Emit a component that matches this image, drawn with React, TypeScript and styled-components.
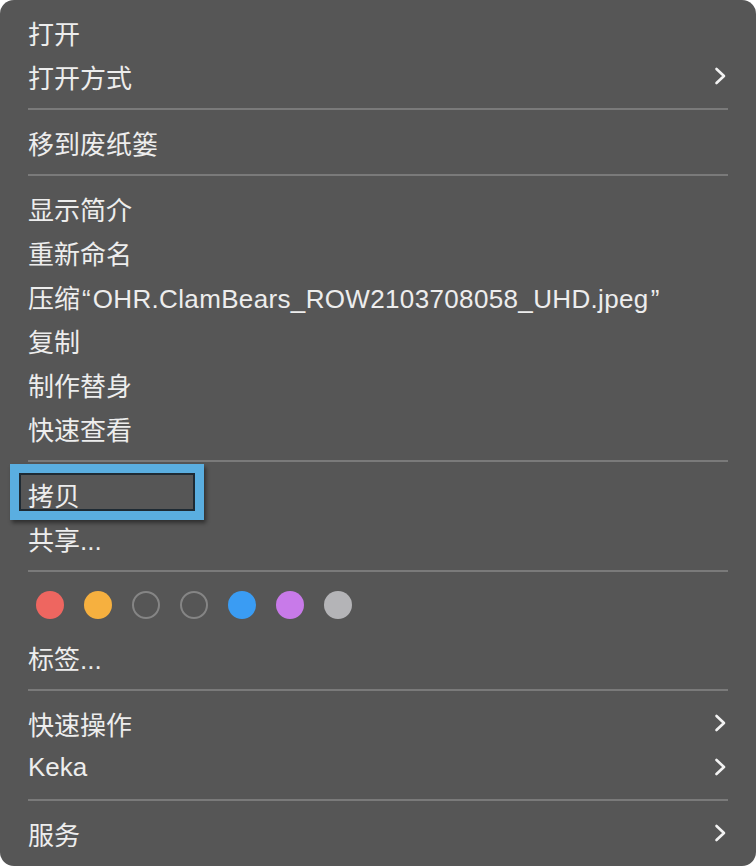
import styled, { createGlobalStyle } from 'styled-components'

const GlobalStyle = createGlobalStyle`
  html, body {
    margin: 0;
    padding: 0;
    background: #ffffff;
  }
  #root {
    width: 756px;
    height: 866px;
  }
`

const Menu = styled.div`
  position: relative;
  box-sizing: border-box;
  width: 756px;
  height: 866px;
  padding: 10px 0;
  background: #565656;
  border-radius: 14px;
  display: flex;
  flex-direction: column;
  font-family: 'Liberation Sans', 'Noto Sans CJK SC', sans-serif;
  color: #ededed;
`

const Row = styled.div`
  height: 44px;
  display: flex;
  align-items: center;
  justify-content: space-between;
  padding: 0 28px 0 28px;
  font-size: 26px;
  white-space: nowrap;
`

const Quote = styled.span`
  display: inline-block;
  margin: 0 2px;
`

const FileName = styled.span`
  letter-spacing: 0.35px;
`

const Separator = styled.div`
  height: 22px;
  display: flex;
  align-items: center;
  padding: 0 28px;
  &::after {
    content: '';
    flex: 1;
    height: 2px;
    background: #7a7a7a;
  }
`

const DotRow = styled.div`
  display: flex;
  gap: 20px;
  padding: 9px 36px 16px;
`

const Dot = styled.span<{ $fill?: string }>`
  width: 28px;
  height: 28px;
  box-sizing: border-box;
  border-radius: 50%;
  background: ${(p) => p.$fill ?? 'transparent'};
  border: ${(p) => (p.$fill ? 'none' : '2px solid #858585')};
`

const Highlight = styled.div`
  position: absolute;
  left: 10px;
  top: 464px;
  width: 194px;
  height: 56px;
  box-sizing: border-box;
  border: 9px solid #5aaee0;
  box-shadow: inset 0 0 0 2px #1e2a33, 2px 3px 4px rgba(0, 0, 0, 0.45);
`

const Chevron = () => (
  <svg width='16' height='20' viewBox='0 0 16 20'>
    <path
      d='M4.5 3 L12 10 L4.5 17'
      fill='none'
      stroke='#f2f2f2'
      strokeWidth='2.6'
      strokeLinecap='round'
      strokeLinejoin='round'
    />
  </svg>
)

const tagColors = [
  '#ee6660',
  '#f6b03f',
  undefined,
  undefined,
  '#3a9cf3',
  '#c87ae9',
  '#b4b4b7',
]

const App = () => {
  return (
    <>
      <GlobalStyle />
      <Menu>
        <Row>打开</Row>
        <Row>
          打开方式
          <Chevron />
        </Row>
        <Separator />
        <Row>移到废纸篓</Row>
        <Separator />
        <Row>显示简介</Row>
        <Row>重新命名</Row>
        <Row>
          <span>
            压缩<Quote>“</Quote>
            <FileName>OHR.ClamBears_ROW2103708058_UHD.jpeg</FileName>
            <Quote>”</Quote>
          </span>
        </Row>
        <Row>复制</Row>
        <Row>制作替身</Row>
        <Row>快速查看</Row>
        <Separator />
        <Row>拷贝</Row>
        <Row>共享...</Row>
        <Separator />
        <DotRow>
          {tagColors.map((c, i) => (
            <Dot key={i} $fill={c} />
          ))}
        </DotRow>
        <Row>标签...</Row>
        <Separator />
        <Row>
          快速操作
          <Chevron />
        </Row>
        <Row>
          Keka
          <Chevron />
        </Row>
        <Separator />
        <Row>
          服务
          <Chevron />
        </Row>
        <Highlight />
      </Menu>
    </>
  )
}

export default App
